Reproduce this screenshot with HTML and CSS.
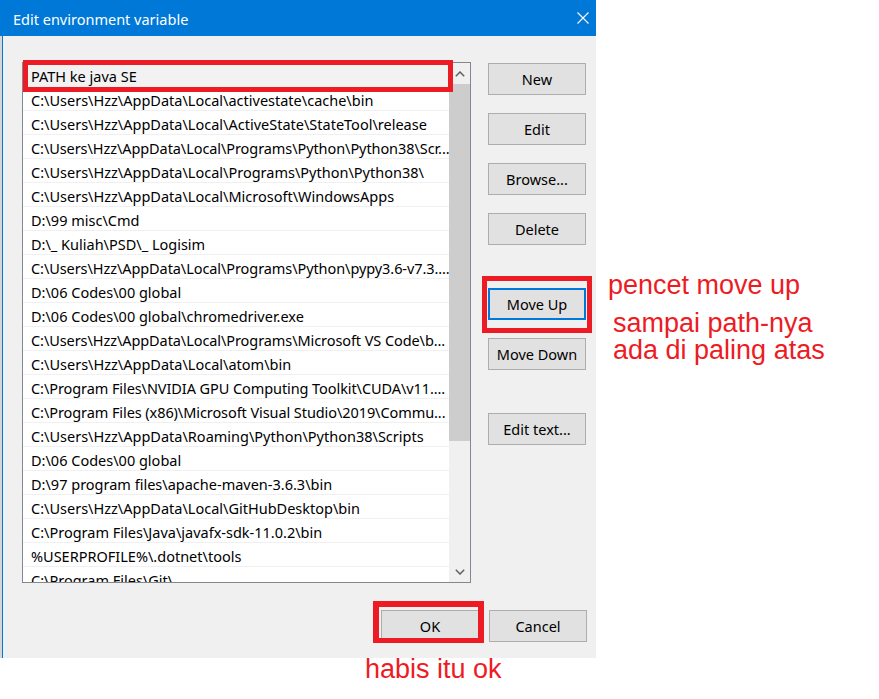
FILE: index.html
```html
<!DOCTYPE html>
<html>
<head>
<meta charset="utf-8">
<title>Edit environment variable</title>
<link rel="stylesheet" href="styles.css">
</head>
<body>
<div class="screen">
  <div class="behind"></div>
  <div class="dialog">
    <div class="titlebar">
      <span class="title">Edit environment variable</span>
      <svg class="close" width="12" height="12" viewBox="0 0 12 12"><path d="M0.5 0.5L11.5 11.5M11.5 0.5L0.5 11.5" stroke="#fff" stroke-width="1.1" fill="none"/></svg>
    </div>
    <div class="content">
      <div class="main">
        <div class="listbox">
          <div class="rows">
            <div class="row selected">PATH ke java SE</div>
            <div class="row">C:\Users\Hzz\AppData\Local\activestate\cache\bin</div>
            <div class="row">C:\Users\Hzz\AppData\Local\ActiveState\StateTool\release</div>
            <div class="row tight">C:\Users\Hzz\AppData\Local\Programs\Python\Python38\Scr...</div>
            <div class="row">C:\Users\Hzz\AppData\Local\Programs\Python\Python38\</div>
            <div class="row">C:\Users\Hzz\AppData\Local\Microsoft\WindowsApps</div>
            <div class="row">D:\99 misc\Cmd</div>
            <div class="row">D:\_ Kuliah\PSD\_ Logisim</div>
            <div class="row tight">C:\Users\Hzz\AppData\Local\Programs\Python\pypy3.6-v7.3....</div>
            <div class="row">D:\06 Codes\00 global</div>
            <div class="row">D:\06 Codes\00 global\chromedriver.exe</div>
            <div class="row tight">C:\Users\Hzz\AppData\Local\Programs\Microsoft VS Code\b...</div>
            <div class="row">C:\Users\Hzz\AppData\Local\atom\bin</div>
            <div class="row tight">C:\Program Files\NVIDIA GPU Computing Toolkit\CUDA\v11....</div>
            <div class="row tight">C:\Program Files (x86)\Microsoft Visual Studio\2019\Commu...</div>
            <div class="row">C:\Users\Hzz\AppData\Roaming\Python\Python38\Scripts</div>
            <div class="row">D:\06 Codes\00 global</div>
            <div class="row">D:\97 program files\apache-maven-3.6.3\bin</div>
            <div class="row">C:\Users\Hzz\AppData\Local\GitHubDesktop\bin</div>
            <div class="row">C:\Program Files\Java\javafx-sdk-11.0.2\bin</div>
            <div class="row">%USERPROFILE%\.dotnet\tools</div>
            <div class="row">C:\Program Files\Git\</div>
          </div>
          <div class="scrollbar">
            <div class="arrow">
              <svg width="10" height="6" viewBox="0 0 10 6"><path d="M0.8 5.2L5 1L9.2 5.2" stroke="#606060" stroke-width="1.5" fill="none"/></svg>
            </div>
            <div class="track"><div class="thumb"></div></div>
            <div class="arrow">
              <svg width="10" height="6" viewBox="0 0 10 6"><path d="M0.8 0.8L5 5L9.2 0.8" stroke="#606060" stroke-width="1.5" fill="none"/></svg>
            </div>
          </div>
        </div>
        <div class="actions">
          <button class="btn">New</button>
          <button class="btn">Edit</button>
          <button class="btn">Browse...</button>
          <button class="btn">Delete</button>
          <button class="btn focused group">Move Up</button>
          <button class="btn">Move Down</button>
          <button class="btn group">Edit text...</button>
        </div>
      </div>
      <div class="footer">
        <button class="btn">OK</button>
        <button class="btn">Cancel</button>
      </div>
    </div>
  </div>
</div>

<div class="mark mark-path"></div>
<div class="mark mark-up"></div>
<div class="mark mark-ok"></div>
<div class="note note-up">pencet move up</div>
<div class="note note-top">sampai path-nya<br>ada di paling atas</div>
<div class="note note-ok">habis itu ok</div>
</body>
</html>
```

FILE: styles.css
```css
html, body {
  margin: 0;
  padding: 0;
}
body {
  width: 879px;
  height: 699px;
  overflow: hidden;
  background: #ffffff;
  position: relative;
  font-family: "Noto Sans", "Open Sans", sans-serif;
  font-size: 14.5px;
  color: #000;
}
.screen {
  display: flex;
  height: 658px;
}
.behind {
  width: 2px;
  background: linear-gradient(#0078d7 0 36px, #d6d6d6 36px);
}
.dialog {
  width: 593px;
  border-left: 1px solid #0078d7;
  background: #f0f0f0;
  display: flex;
  flex-direction: column;
}
.titlebar {
  height: 36px;
  background: #0078d7;
  display: flex;
  align-items: center;
  padding-left: 10px;
  padding-right: 7px;
  flex: none;
}
.title {
  color: #fff;
  font-size: 14.5px;
  position: relative;
  top: 1px;
}
.close {
  margin-left: auto;
}
.content {
  flex: 1;
  display: flex;
  flex-direction: column;
  padding: 26px 9px 0 19px;
}
.main {
  display: flex;
  align-items: flex-start;
}
.listbox {
  width: 449px;
  height: 521px;
  box-sizing: border-box;
  border: 1px solid #828790;
  background: #fff;
  display: flex;
}
.rows {
  width: 426px;
  overflow: hidden;
}
.row {
  height: 24px;
  box-sizing: border-box;
  border-bottom: 1px solid #f0f0f0;
  padding: 2px 0 0 8px;
  line-height: 22px;
  white-space: nowrap;
}
.row.tight {
  letter-spacing: -0.08px;
}
.row.selected {
  background: #f2f2f2;
}
.scrollbar {
  width: 21px;
  background: #f0f0f0;
  display: flex;
  flex-direction: column;
}
.arrow {
  height: 21px;
  display: flex;
  align-items: center;
  justify-content: center;
  flex: none;
}
.track {
  flex: 1;
}
.thumb {
  height: 357px;
  background: #cdcdcd;
}
.actions {
  margin-left: 17px;
  padding-top: 1px;
  display: flex;
  flex-direction: column;
  gap: 18px;
}
.btn {
  width: 98px;
  height: 32px;
  box-sizing: border-box;
  border: 1px solid #adadad;
  background: #e1e1e1;
  font-family: "Noto Sans", "Open Sans", sans-serif;
  font-size: 14.5px;
  color: #000;
  padding: 0;
  margin: 0;
}
.btn.group {
  margin-top: 25px;
}
.btn.focused {
  border: 2px solid #0078d7;
}
.footer {
  display: flex;
  justify-content: flex-end;
  gap: 10px;
  margin-top: 27px;
}

.mark {
  position: absolute;
  box-sizing: border-box;
  border: 5px solid #ed1c24;
}
.mark-path {
  left: 23px;
  top: 60px;
  width: 430px;
  height: 32px;
}
.mark-up {
  left: 482px;
  top: 276px;
  width: 110px;
  height: 57px;
}
.mark-ok {
  left: 373px;
  top: 601px;
  width: 111px;
  height: 42px;
  border-width: 6px 6px 5px 6px;
}
.note {
  position: absolute;
  color: #ed1c24;
  font-family: "Liberation Sans", Arial, sans-serif;
  font-size: 27px;
  line-height: 27px;
  white-space: nowrap;
}
.note-up {
  left: 608px;
  top: 272px;
}
.note-top {
  left: 613px;
  top: 310px;
}
.note-ok {
  left: 365px;
  top: 656px;
}
```
